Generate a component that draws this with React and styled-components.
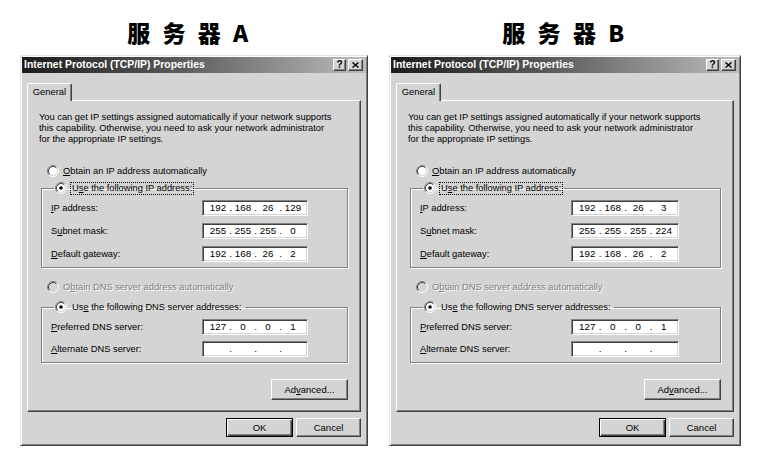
import React from 'react';
import styled, { createGlobalStyle, css } from 'styled-components';

const FACE = '#d4d4d4';
const SHADOW = '#808080';
const DARK = '#404040';
const UI_FONT = '"Liberation Sans", Arial, sans-serif';

const GlobalStyle = createGlobalStyle`
  html, body { margin: 0; padding: 0; background: #fff; }
  body { font-family: ${UI_FONT}; }
`;

const Page = styled.div`
  display: flex;
  gap: 21px;
  padding-left: 20px;
  width: 763px;
  height: 461px;
  box-sizing: border-box;
  background: #fff;
`;

const Column = styled.div`
  display: flex;
  flex-direction: column;
  width: ${(p) => p.$w}px;
`;

const Heading = styled.h1`
  margin: 0;
  height: 55px;
  box-sizing: border-box;
  padding-top: 19px;
  padding-right: ${(p) => p.$shift || 0}px;
  font: 900 23px/26px "Noto Sans CJK SC", sans-serif;
  letter-spacing: 3.5px;
  text-align: center;
  color: #000;
`;

const Dialog = styled.div`
  background: ${FACE};
  border: 1px solid;
  border-color: #e4e4e4 ${DARK} ${DARK} #e4e4e4;
  box-shadow: inset 1px 1px #fff, inset -1px -1px ${SHADOW};
  padding: 1px;
  display: flex;
  flex-direction: column;
`;

const TitleBar = styled.div`
  height: 16px;
  display: flex;
  align-items: center;
  justify-content: space-between;
  padding: 0 3px 0 2px;
  background: linear-gradient(to right, #1c1c1c 0%, #5a5a5a 45%, #bdbdbd 100%);
`;

const TitleText = styled.span`
  color: #fff;
  font: bold 10.4px/16px ${UI_FONT};
  white-space: nowrap;
`;

const CaptionButtons = styled.div`
  display: flex;
  gap: 2px;
`;

const CaptionButton = styled.div`
  width: ${(p) => p.$w}px;
  height: 12px;
  box-sizing: border-box;
  background: ${FACE};
  border: 1px solid;
  border-color: #fff ${DARK} ${DARK} #fff;
  box-shadow: inset -1px -1px ${SHADOW};
  display: flex;
  align-items: center;
  justify-content: center;
  font: bold 10px/10px ${UI_FONT};
  color: #000;
`;

const Body = styled.div`
  display: flex;
  flex-direction: column;
  padding: 10px 5px 7px 5px;
`;

const TabStrip = styled.div`
  display: flex;
`;

const Tab = styled.div`
  width: 45px;
  height: 18px;
  box-sizing: border-box;
  margin-bottom: -1px;
  background: ${FACE};
  border: 1px solid;
  border-bottom: none;
  border-color: #fff ${DARK} transparent #fff;
  box-shadow: inset -1px 0 ${SHADOW};
  border-radius: 2px 2px 0 0;
  font: 9.4px/16px ${UI_FONT};
  text-align: center;
  color: #000;
  z-index: 1;
`;

const Panel = styled.div`
  border: 1px solid;
  border-color: #fff ${DARK} ${DARK} #fff;
  box-shadow: inset -1px -1px ${SHADOW};
  padding: 11px 12px 11px 11px;
  display: flex;
  flex-direction: column;
  font: 9.3px/11px ${UI_FONT};
  color: #000;
`;

const Intro = styled.p`
  margin: 0;
  font: 9.3px/11px ${UI_FONT};
  white-space: nowrap;
`;

const RadioRow = styled.div`
  display: flex;
  align-items: center;
  gap: 4px;
  height: 12px;
  margin-top: ${(p) => p.$mt || 0}px;
  margin-left: 8px;
  color: ${(p) => (p.$disabled ? SHADOW : '#000')};
  text-shadow: ${(p) => (p.$disabled ? '1px 1px #fff' : 'none')};
  white-space: nowrap;
`;

const Group = styled.fieldset`
  margin: ${(p) => p.$mt || 0}px 0 0 2px;
  padding: 6px 0 5px 9px;
  border: 1px solid ${SHADOW};
  box-shadow: inset 1px 1px #fff, 1px 1px #fff;
  display: flex;
  flex-direction: column;
  gap: ${(p) => p.$gap}px;
  min-width: 0;
`;

const Legend = styled.legend`
  margin-left: 3px;
  padding: 0 2px 0 1px;
  height: 12px;
  display: flex;
  align-items: center;
  gap: 4px;
  white-space: nowrap;
  font: 9.3px/11px ${UI_FONT};
`;

const Focus = styled.span`
  ${(p) =>
    p.$focused &&
    css`
      outline: 1px dotted #000;
      outline-offset: 0;
    `}
  padding: 0 1px;
`;

const FieldRow = styled.div`
  display: grid;
  grid-template-columns: 151px ${(p) => p.$iw}px;
  align-items: center;
  height: 16px;
`;

const Label = styled.span`
  white-space: nowrap;
`;

const IpBox = styled.div`
  height: 16px;
  box-sizing: border-box;
  background: #fff;
  border: 1px solid;
  border-color: ${SHADOW} #fff #fff ${SHADOW};
  box-shadow: inset 1px 1px ${DARK}, inset -1px -1px ${FACE};
  display: grid;
  grid-template-columns: 1fr 5px 1fr 5px 1fr 5px 1fr;
  align-items: center;
  padding: 0 4px 0 5px;
  font: 9.8px/14px ${UI_FONT};
`;

const Octet = styled.span`
  text-align: center;
`;

const Dot = styled.span`
  text-align: center;
`;

const ButtonRow = styled.div`
  display: flex;
  justify-content: flex-end;
  gap: ${(p) => p.$gap || 0}px;
  margin-top: ${(p) => p.$mt || 0}px;
`;

const Button = styled.div`
  width: ${(p) => p.$w}px;
  height: ${(p) => p.$h}px;
  box-sizing: border-box;
  background: ${FACE};
  border: 1px solid;
  border-color: #fff ${DARK} ${DARK} #fff;
  box-shadow: inset -1px -1px ${SHADOW};
  display: flex;
  align-items: center;
  justify-content: center;
  font: 9.5px/11px ${UI_FONT};
  color: #000;
  ${(p) =>
    p.$default &&
    css`
      border-color: #000;
      box-shadow: inset 1px 1px #fff, inset -1px -1px ${DARK}, inset -2px -2px ${SHADOW};
    `}
`;

function Radio({ checked, disabled }) {
  const fill = disabled ? FACE : '#fff';
  const dot = disabled ? SHADOW : '#000';
  return (
    <svg width="12" height="12" viewBox="0 0 12 12" style={{ flex: 'none' }}>
      <circle cx="6" cy="6" r="5" fill={fill} />
      <path d="M2.11 9.89 A5.5 5.5 0 0 1 9.89 2.11" fill="none" stroke={SHADOW} strokeWidth="1" />
      <path d="M9.89 2.11 A5.5 5.5 0 0 1 2.11 9.89" fill="none" stroke="#fff" strokeWidth="1" />
      <path d="M2.82 9.18 A4.5 4.5 0 0 1 9.18 2.82" fill="none" stroke={DARK} strokeWidth="1" />
      <path d="M9.18 2.82 A4.5 4.5 0 0 1 2.82 9.18" fill="none" stroke={FACE} strokeWidth="1" />
      {checked && <circle cx="6" cy="6" r="1.8" fill={dot} />}
    </svg>
  );
}

function CloseGlyph() {
  return (
    <svg width="7" height="6" viewBox="0 0 7 6">
      <path d="M0.5 0.5 L6.5 5.5 M6.5 0.5 L0.5 5.5" stroke="#000" strokeWidth="1.4" />
    </svg>
  );
}

function IpField({ value, width }) {
  const parts = value ? value.split('.') : ['', '', '', ''];
  const cells = [];
  parts.forEach((p, i) => {
    cells.push(<Octet key={`o${i}`}>{p}</Octet>);
    if (i < 3) cells.push(<Dot key={`d${i}`}>.</Dot>);
  });
  return <IpBox style={{ width }}>{cells}</IpBox>;
}

function Field({ label, value, inputWidth }) {
  return (
    <FieldRow $iw={inputWidth}>
      <Label>{label}</Label>
      <IpField value={value} width={inputWidth} />
    </FieldRow>
  );
}

function TcpIpDialog({ data }) {
  const iw = data.inputWidth;
  return (
    <Dialog>
      <TitleBar>
        <TitleText>Internet Protocol (TCP/IP) Properties</TitleText>
        <CaptionButtons>
          <CaptionButton $w={13}>?</CaptionButton>
          <CaptionButton $w={15}>
            <CloseGlyph />
          </CaptionButton>
        </CaptionButtons>
      </TitleBar>
      <Body>
        <TabStrip>
          <Tab>General</Tab>
        </TabStrip>
        <Panel>
          <Intro>
            You can get IP settings assigned automatically if your network supports
            <br />
            this capability. Otherwise, you need to ask your network administrator
            <br />
            for the appropriate IP settings.
          </Intro>
          <RadioRow $mt={20}>
            <Radio />
            <span>
              <u>O</u>btain an IP address automatically
            </span>
          </RadioRow>
          <Group $mt={5} $gap={7}>
            <Legend>
              <Radio checked />
              <Focus $focused>
                U<u>s</u>e the following IP address:
              </Focus>
            </Legend>
            <Field label={<><u>I</u>P address:</>} value={data.ip} inputWidth={iw} />
            <Field label={<>S<u>u</u>bnet mask:</>} value={data.mask} inputWidth={iw} />
            <Field label={<><u>D</u>efault gateway:</>} value={data.gateway} inputWidth={iw} />
          </Group>
          <RadioRow $mt={13} $disabled>
            <Radio disabled />
            <span>
              O<u>b</u>tain DNS server address automatically
            </span>
          </RadioRow>
          <Group $mt={8} $gap={6}>
            <Legend>
              <Radio checked />
              <Focus>
                Us<u>e</u> the following DNS server addresses:
              </Focus>
            </Legend>
            <Field label={<><u>P</u>referred DNS server:</>} value={data.dns1} inputWidth={iw} />
            <Field label={<><u>A</u>lternate DNS server:</>} value={data.dns2} inputWidth={iw} />
          </Group>
          <ButtonRow $mt={16}>
            <Button $w={77} $h={21}>
              Ad<u>v</u>anced...
            </Button>
          </ButtonRow>
        </Panel>
        <ButtonRow $mt={6} $gap={3}>
          <Button $w={67} $h={19} $default>
            OK
          </Button>
          <Button $w={65} $h={19}>
            Cancel
          </Button>
        </ButtonRow>
      </Body>
    </Dialog>
  );
}

const servers = [
  {
    name: '服 务 器 A',
    width: 348,
    shift: 9,
    inputWidth: 106,
    ip: '192.168.26.129',
    mask: '255.255.255.0',
    gateway: '192.168.26.2',
    dns1: '127.0.0.1',
    dns2: '',
  },
  {
    name: '服 务 器 B',
    width: 352,
    shift: 0,
    inputWidth: 108,
    ip: '192.168.26.3',
    mask: '255.255.255.224',
    gateway: '192.168.26.2',
    dns1: '127.0.0.1',
    dns2: '',
  },
];

export default function App() {
  return (
    <>
      <GlobalStyle />
      <Page>
        {servers.map((s) => (
          <Column key={s.name} $w={s.width}>
            <Heading $shift={s.shift}>{s.name}</Heading>
            <TcpIpDialog data={s} />
          </Column>
        ))}
      </Page>
    </>
  );
}
